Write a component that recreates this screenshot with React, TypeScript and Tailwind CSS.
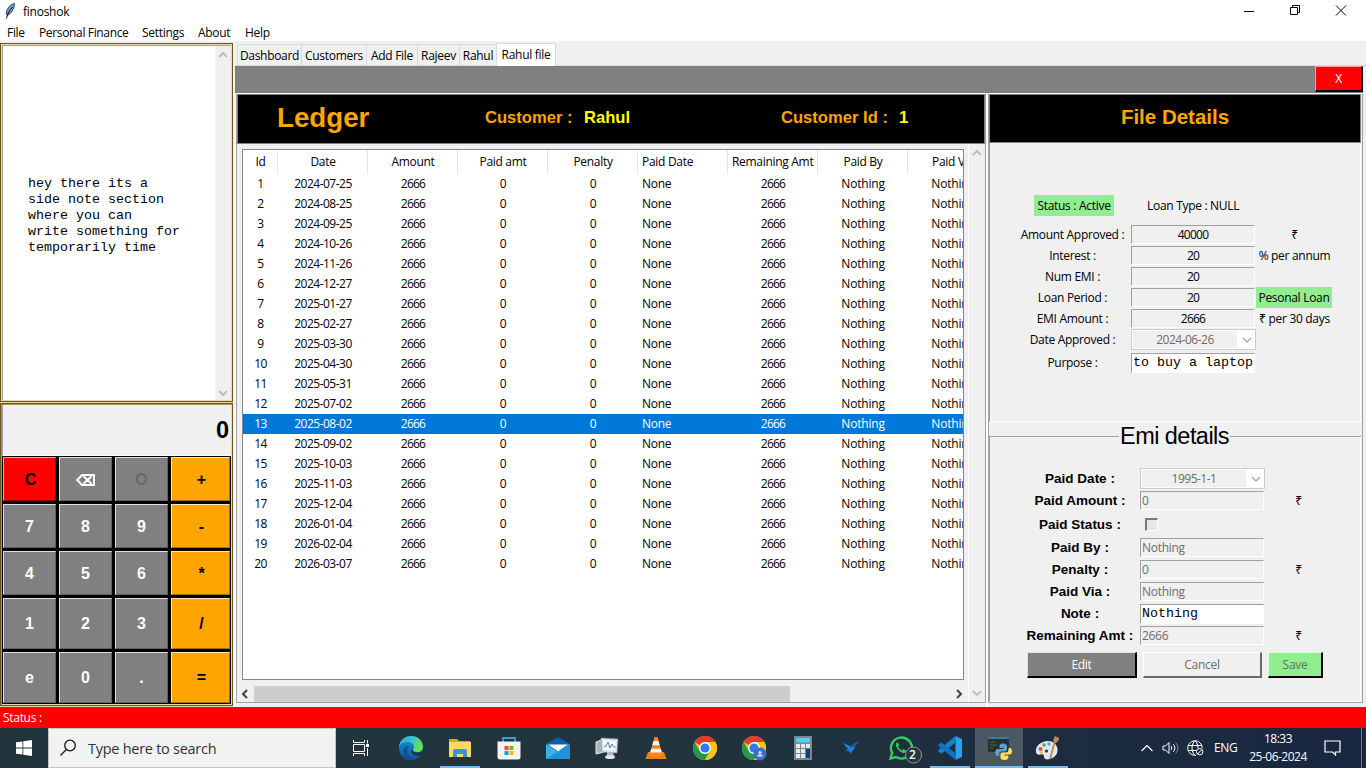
import React from "react";

const ui = "font-['Open_Sans','Noto_Sans',sans-serif] text-[12px] leading-none tracking-[-0.3px]";
const arial = "font-['Liberation_Sans',Arial,sans-serif]";
const mono = "font-['Liberation_Mono','Courier_New',monospace]";

const dates = [
  "2024-07-25", "2024-08-25", "2024-09-25", "2024-10-26", "2024-11-26",
  "2024-12-27", "2025-01-27", "2025-02-27", "2025-03-30", "2025-04-30",
  "2025-05-31", "2025-07-02", "2025-08-02", "2025-09-02", "2025-10-03",
  "2025-11-03", "2025-12-04", "2026-01-04", "2026-02-04", "2026-03-07",
];

function Chevron({ dir, color = "#bfbfbf", w = 2 }: { dir: "up" | "down" | "left" | "right"; color?: string; w?: number }) {
  const d = {
    up: "M1 7l4-4 4 4",
    down: "M1 3l4 4 4-4",
    left: "M7 1L3 5l4 4",
    right: "M3 1l4 4-4 4",
  }[dir];
  return (
    <svg width="10" height="10" viewBox="0 0 10 10" fill="none" stroke={color} strokeWidth={w}>
      <path d={d} />
    </svg>
  );
}

function TitleBar() {
  return (
    <div className="flex h-[22px] shrink-0 items-center bg-white">
      <svg className="ml-[4px] shrink-0" width="12" height="16" viewBox="0 0 12 16">
        <path d="M10.5 .5C7 1 3.500 4.500 2.500 9c-.3 1.500 0 3 .7 3.500C7 11 10.500 6 10.500 .5Z" fill="#6f9bd0" stroke="#1b2636" strokeWidth=".8" />
        <path d="M8.500 4C6 7 3.500 10 2.500 15.500" fill="none" stroke="#0b0f16" strokeWidth="1" />
      </svg>
      <span className="ml-[7px] mt-[2px] tracking-[-0.25px]">finoshok</span>
      <div className="ml-auto flex items-center">
        <svg width="46" height="22" viewBox="0 0 46 22"><path d="M18 11.500h10" stroke="#000" /></svg>
        <svg width="46" height="22" viewBox="0 0 46 22" fill="none" stroke="#000">
          <path d="M18.500 7.500h7v7h-7zM20.500 7.500v-2h7v7h-2" />
        </svg>
        <svg width="46" height="22" viewBox="0 0 46 22" stroke="#000"><path d="M18 5.500l10 10M28 5.500l-10 10" /></svg>
        <div className="w-[2px]" />
      </div>
    </div>
  );
}

function MenuBar() {
  return (
    <div className="flex h-[19px] shrink-0 items-center bg-white pl-[7px] pt-[2px]">
      <span className="w-[32px]">File</span>
      <span className="w-[103px] whitespace-nowrap tracking-[-0.35px]">Personal Finance</span>
      <span className="w-[56px]">Settings</span>
      <span className="w-[47px]">About</span>
      <span>Help</span>
    </div>
  );
}

function Notes() {
  return (
    <div className="flex h-[359px] border border-[#6b561c] shadow-[inset_1px_1px_0_#e8dcae] p-px">
      <div className="flex flex-1 border-l border-t border-[#a0a0a0] bg-white">
        <div className={`${mono} flex-1 whitespace-pre pl-[25px] pt-[130px] text-[13.33px] leading-[16px] tracking-normal`}>
          {"hey there its a\nside note section\nwhere you can\nwrite something for\ntemporarily time"}
        </div>
        <div className="flex w-[16px] flex-col items-center justify-between bg-[#f0f0f0] pb-[2px] pt-[4px]">
          <Chevron dir="up" />
          <Chevron dir="down" />
        </div>
      </div>
    </div>
  );
}

const keys: [string, string][][] = [
  [["C", "red"], ["⌫", "g"], ["O", "off"], ["+", "o"]],
  [["7", "g"], ["8", "g"], ["9", "g"], ["-", "o"]],
  [["4", "g"], ["5", "g"], ["6", "g"], ["*", "o"]],
  [["1", "g"], ["2", "g"], ["3", "g"], ["/", "o"]],
  [["e", "g"], ["0", "g"], [".", "g"], ["=", "o"]],
];

const keyStyle: Record<string, string> = {
  red: "bg-[#ff0000] text-black border-t-[#ffa0a0] border-l-[#ffa0a0] border-b-[#a00000] border-r-[#a00000] pl-[2px]",
  g: "bg-[#808080] text-white border-t-[#e0e0e0] border-l-[#e0e0e0] border-b-[#606060] border-r-[#606060]",
  off: "bg-[#808080] text-[#696969] border-t-[#e0e0e0] border-l-[#e0e0e0] border-b-[#606060] border-r-[#606060]",
  o: "bg-[#ffa500] text-black border-t-[#ffe9b8] border-l-[#ffe9b8] border-b-[#a87000] border-r-[#a87000] pl-[2px]",
};

function BackspaceGlyph() {
  return (
    <svg width="20" height="14" viewBox="0 0 20 14" fill="none" stroke="#fff" strokeWidth="2">
      <path d="M1.200 7L6 2h12v10H6zM7.500 3.200l8 7.600M15.500 3.200l-8 7.600" />
    </svg>
  );
}

function Calculator() {
  return (
    <div className="flex flex-1 flex-col border border-[#6b561c] p-px shadow-[inset_1px_1px_0_#a99450]">
      <div className={`${arial} flex h-[51px] items-center justify-end border-b border-l border-[#fff] border-l-[#a0a0a0] bg-[#f0f0f0] pr-[2px] text-[23.500px] font-bold tracking-normal`}>
        <span className="mt-px">0</span>
      </div>
      <div className="grid flex-1 grid-cols-[53px_53px_53px_59px] grid-rows-[44px_44px_44px_51px_51px] gap-[3px] bg-black pl-px pt-px">
        {keys.flat().map(([k, s]) => (
          <div key={k} className={`${arial} flex items-center justify-center border pt-px text-[16px] font-bold tracking-normal ${keyStyle[s]}`}>
            {k === "⌫" ? <BackspaceGlyph /> : k}
          </div>
        ))}
      </div>
    </div>
  );
}

function Tabs() {
  const tab = "flex h-[21px] items-center justify-center border-l border-t border-[#d9d9d9] bg-[#f0f0f0] pt-px whitespace-nowrap";
  return (
    <div className="flex h-[25px] items-end border-b border-[#d9d9d9] pl-[2px] pt-[2px]">
      <div className={`${tab} w-[64px]`}>Dashboard</div>
      <div className={`${tab} w-[65px]`}>Customers</div>
      <div className={`${tab} w-[51px]`}>Add File</div>
      <div className={`${tab} w-[42px]`}>Rajeev</div>
      <div className={`${tab} w-[37px]`}>Rahul</div>
      <div className="-mb-px flex h-[23px] w-[60px] items-center justify-center border border-b-0 border-[#d9d9d9] bg-white">Rahul file</div>
    </div>
  );
}

const cols = "grid grid-cols-[35px_90px_90px_90px_90px_90px_90px_90px_90px]";

function LedgerTable() {
  const head = ["Id", "Date", "Amount", "Paid amt", "Penalty", "Paid Date", "Remaining Amt", "Paid By", "Paid Via"];
  return (
    <div className="h-[531px] w-[722px] overflow-hidden border border-[#828790] bg-white">
      <div className={`${cols} h-[24px]`}>
        {head.map((h, i) => (
          <div key={h} className={`flex items-center overflow-hidden whitespace-nowrap border-r border-[#e5e5e5] ${i === 5 || i === 6 ? "justify-start pl-[4px]" : "justify-center pl-px"}`}>
            {h}
          </div>
        ))}
      </div>
      {dates.map((d, i) => {
        const on = i === 12;
        return (
          <div key={d} className={`${cols} h-[20px] items-center text-center ${on ? "bg-[#0078d7] text-white" : ""}`}>
            <span className="tracking-[-0.6px]">{i + 1}</span>
            <span className="tracking-[-0.5px]">{d}</span>
            <span className="tracking-[-0.75px]">2666</span>
            <span>0</span>
            <span>0</span>
            <span className="pl-[4px] text-left">None</span>
            <span className="tracking-[-0.75px]">2666</span>
            <span className="tracking-[-0.2px]">Nothing</span>
            <span className="tracking-[-0.2px]">Nothing</span>
          </div>
        );
      })}
    </div>
  );
}

function Ledger() {
  return (
    <div className="flex w-[750px] shrink-0 flex-col border border-t-white border-l-[#a0a0a0] border-r-[#a0a0a0] border-b-[#a0a0a0]">
      <div className={`${arial} flex h-[50px] shrink-0 items-center border border-[#808080] bg-black pb-[2px] font-bold tracking-normal text-[#ffa500]`}>
        <span className="ml-[39px] w-[208px] text-[27.700px]">Ledger</span>
        <span className="w-[99px] whitespace-nowrap text-[16.600px]">Customer :</span>
        <span className="w-[197px] text-[16.600px] text-[#ffff00]">Rahul</span>
        <span className="w-[118px] whitespace-nowrap text-[16.600px]">Customer Id :</span>
        <span className="text-[16.600px] text-[#ffff00]">1</span>
      </div>
      <div className="flex flex-1">
        <div className="flex w-[731px] flex-col pt-[5px]">
          <div className="pl-[5px]">
            <LedgerTable />
          </div>
          <div className="mt-[6px] flex h-[16px] items-center pl-[3px]">
            <Chevron dir="left" color="#404040" />
            <div className="ml-[4px] h-full w-[536px] bg-[#cdcdcd]" />
            <div className="ml-auto mr-[4px] h-[10px]">
              <Chevron dir="right" color="#404040" />
            </div>
          </div>
        </div>
        <div className="flex flex-1 flex-col items-center justify-between border-l border-white py-[4px]">
          <Chevron dir="up" />
          <Chevron dir="down" />
        </div>
      </div>
    </div>
  );
}

const sunken = "border border-t-[#a0a0a0] border-l-[#a0a0a0] border-b-white border-r-white";

function DateBox({ value }: { value: string }) {
  return (
    <div className="flex h-[21px] w-[125px] border border-[#cccccc] bg-white p-px text-[#6d6d6d]">
      <div className="flex flex-1 items-center justify-center bg-[#f0f0f0] tracking-[-0.5px]">{value}</div>
      <div className="flex w-[17px] items-center justify-center pl-[2px]">
        <Chevron dir="down" color="#a8a8a8" w={1.3} />
      </div>
    </div>
  );
}

function DetailRow({ label, value, extra, badge }: { label: string; value: string; extra?: string; badge?: boolean }) {
  return (
    <div className="grid h-[21px] grid-cols-[117px_124px_78px] items-center whitespace-nowrap text-center">
      <span>{label}</span>
      <div className={`${sunken} flex h-[19px] items-center justify-center tracking-[-0.75px]`}>{value}</div>
      <div className={`ml-px flex h-[21px] items-center justify-center ${badge ? "w-[76px] bg-[#90ee90]" : ""}`}>{extra}</div>
    </div>
  );
}

function FileDetails() {
  return (
    <div className="flex h-[279px] flex-col border-b border-l border-r border-b-white border-l-[#a0a0a0] border-r-white pl-[24px] pt-[52px]">
      <div className="mb-[8px] flex h-[21px] whitespace-nowrap">
        <span className="ml-[20px] flex w-[80px] items-center justify-center bg-[#90ee90]">Status : Active</span>
        <span className="ml-[33px] flex items-center">Loan Type : NULL</span>
      </div>
      <DetailRow label="Amount Approved :" value="40000" extra="₹" />
      <DetailRow label="Interest :" value="20" extra="% per annum" />
      <DetailRow label="Num EMI :" value="20" />
      <DetailRow label="Loan Period :" value="20" extra="Pesonal Loan" badge />
      <DetailRow label="EMI Amount :" value="2666" extra="₹ per 30 days" />
      <div className="grid h-[21px] grid-cols-[117px_125px] items-center text-center">
        <span>Date Approved :</span>
        <DateBox value="2024-06-26" />
      </div>
      <div className="mt-[3px] grid h-[20px] grid-cols-[117px_124px] items-center text-center">
        <span>Purpose :</span>
        <div className={`${mono} ${sunken} flex h-[20px] items-center whitespace-nowrap bg-white pl-px text-[13.33px] tracking-normal`}>to buy a laptop</div>
      </div>
    </div>
  );
}

function EmiLabel({ children }: { children: React.ReactNode }) {
  return <span className={`${arial} whitespace-nowrap text-center text-[13.5px] font-bold tracking-normal`}>{children}</span>;
}

const emiRow = "grid grid-cols-[120px_125px_67px] items-center pl-[30px]";

function EmiRow({ label, value, rupee, note }: { label: string; value: string; rupee?: boolean; note?: boolean }) {
  return (
    <div className={`${emiRow} h-[22px]`}>
      <EmiLabel>{label}</EmiLabel>
      {note ? (
        <div className={`${mono} ${sunken} flex h-[20px] w-[124px] items-center bg-white pl-px text-[13.33px] tracking-normal`}>{value}</div>
      ) : (
        <div className={`${sunken} mb-px flex h-[19px] w-[124px] items-center pl-px text-[#6d6d6d]`}>{value}</div>
      )}
      <span className="text-center">{rupee ? "₹" : ""}</span>
    </div>
  );
}

function EmiDetails() {
  return (
    <div className="flex flex-1 flex-col">
      <div className="flex h-[29px] items-center">
        <div className="h-px w-[130px] bg-[#a0a0a0]" />
        <span className={`${arial} w-[111px] whitespace-nowrap text-center text-[23.500px] tracking-[-0.55px]`}>Emi details</span>
        <div className="h-px flex-1 bg-[#a0a0a0]" />
      </div>
      <div className="-mt-[14px] flex flex-1 flex-col border-b border-l border-r border-b-white border-l-[#a0a0a0] border-r-white pt-[31px]">
        <div className={`${emiRow} mb-px h-[21px]`}>
          <EmiLabel>Paid Date :</EmiLabel>
          <DateBox value="1995-1-1" />
        </div>
        <EmiRow label="Paid Amount :" value="0" rupee />
        <div className={`${emiRow} h-[25px]`}>
          <EmiLabel>Paid Status :</EmiLabel>
          <div className="ml-[5px] h-[13px] w-[13px] border-2 border-b border-r border-t-[#7a7a7a] border-l-[#7a7a7a] border-b-white border-r-white bg-[#e6e6e6]" />
        </div>
        <EmiRow label="Paid By :" value="Nothing" />
        <EmiRow label="Penalty :" value="0" rupee />
        <EmiRow label="Paid Via :" value="Nothing" />
        <EmiRow label="Note :" value="Nothing" note />
        <EmiRow label="Remaining Amt :" value="2666" rupee />
        <div className="mt-[5px] flex pl-[37px]">
          <div className="flex h-[26px] w-[110px] items-center justify-center border-b-2 border-l border-r-2 border-t border-b-black border-l-[#e0e0e0] border-r-black border-t-[#e0e0e0] bg-[#808080] text-white">Edit</div>
          <div className="ml-[6px] flex h-[26px] w-[119px] items-center justify-center border-b-2 border-l border-r-2 border-t border-b-[#696969] border-l-white border-r-[#696969] border-t-white text-[#6d6d6d]">Cancel</div>
          <div className="ml-[6px] flex h-[26px] w-[55px] items-center justify-center border-b-2 border-l border-r-2 border-t border-b-black border-l-[#d8ffd8] border-r-black border-t-[#d8ffd8] bg-[#90ee90] text-[#6d6d6d]">Save</div>
        </div>
      </div>
    </div>
  );
}

function RightPanel() {
  return (
    <div className="flex w-[375px] shrink-0 flex-col border border-t-white border-l-[#a0a0a0] border-r-[#a0a0a0] border-b-[#a0a0a0] pr-px">
      <div className={`${arial} flex h-[49px] shrink-0 items-center justify-center border border-[#808080] bg-black pb-[2px] text-[20.500px] font-bold tracking-normal text-[#ffa500]`}>
        File Details
      </div>
      <FileDetails />
      <EmiDetails />
    </div>
  );
}

function Chrome() {
  return (
    <g>
      <circle cx="12" cy="12" r="12" fill="#fbc116" />
      <path d="M12 12L1.600 6A12 12 0 0 1 22.400 6Z" fill="#e33b2e" />
      <path d="M12 6H22.400A12 12 0 0 0 12 0Z" fill="#e33b2e" />
      <path d="M1.600 6A12 12 0 0 0 12 24L17.200 15L12 12L6.800 15Z" fill="#229a4a" />
      <path d="M12 6h10.400A12 12 0 0 1 12 24l5.200-9z" fill="#fcc31b" />
      <circle cx="12" cy="12" r="6" fill="#fff" />
      <circle cx="12" cy="12" r="4.600" fill="#3079ee" />
    </g>
  );
}

const icons: { name: string; art: React.ReactNode; state?: "open" | "active" }[] = [
  {
    name: "edge",
    art: (
      <g>
        <defs>
          <linearGradient id="e1" x1="0" y1="0" x2="1" y2="0.400"><stop offset="0" stopColor="#2aa7e0" /><stop offset=".5" stopColor="#34c3d8" /><stop offset="1" stopColor="#6bdf4f" /></linearGradient>
          <linearGradient id="e2" x1="0" y1="0" x2="0" y2="1"><stop offset="0" stopColor="#1b8ddb" /><stop offset="1" stopColor="#0c59a4" /></linearGradient>
        </defs>
        <circle cx="12" cy="12" r="12" fill="url(#e2)" />
        <path d="M0 11C.5 4 6 0 12 0c7 0 12 5 12 10.500 0 3.500-2.500 5.500-5.500 5.500-2.500 0-4.500-.8-4.500-2 0-.8 1-1.200 1-3C15 8 12 6 8.500 6 4.500 6 1 8.500 0 11Z" fill="url(#e1)" />
        <path d="M10 10c-2.500 2-2.500 7 1 10 3 2.500 7 2.500 11-.5-2.500 3.500-7 5-11 4.500C5 23 3 17 5 13c1-2 3-3 5-3Z" fill="#134f91" />
        <path d="M13.500 13.500c0 3 4.500 4.300 9.500 1.500l1.500 3c-4 3.500-12 2-12.500-3z" fill="#213740" />
      </g>
    ),
  },
  {
    name: "explorer",
    state: "open",
    art: (
      <g>
        <path d="M1 3h8l2 2h11v4H1z" fill="#e0a526" />
        <path d="M1 6h22v15H1z" fill="#ffd767" />
        <path d="M5 21v-6a2 2 0 0 1 2-2h10a2 2 0 0 1 2 2v6h-4v-3H9v3z" fill="#3f93cf" />
      </g>
    ),
  },
  {
    name: "store",
    art: (
      <g>
        <path d="M6 7V2h12v5" fill="none" stroke="#2fa8dc" strokeWidth="1.800" />
        <path d="M.5 5.500h23V21a2.500 2.500 0 0 1-2.500 2.500H3A2.500 2.500 0 0 1 .5 21z" fill="#f4f4f4" />
        <path d="M7.500 10h4v4h-4z" fill="#f25022" /><path d="M12.500 10h4v4h-4z" fill="#7fba00" />
        <path d="M7.500 15h4v4h-4z" fill="#00a4ef" /><path d="M12.500 15h4v4h-4z" fill="#ffb900" />
      </g>
    ),
  },
  {
    name: "mail",
    art: (
      <g>
        <path d="M0 8L12 1l12 7v4H0z" fill="#0f5fae" />
        <path d="M0 8l12 8 12-8v15H0z" fill="#35b4ee" />
        <path d="M0 23L24 8v15z" fill="#1f93dd" />
        <path d="M2 8.500h20L12 15.500z" fill="#f5f9fc" />
      </g>
    ),
  },
  {
    name: "monitor",
    art: (
      <g>
        <path d="M1 6l8-3v13l-8 2z" fill="#aab3b8" stroke="#e8ecee" />
        <path d="M6 2l17 1-1 14-15-1z" fill="#dfe4e7" stroke="#8d979d" strokeWidth=".6" />
        <path d="M8 4.200l13 .8-.8 9.500L9 13.700z" fill="#f7fbff" />
        <path d="M9 11l2-1 2-4 2 6 2-4 1.500 3h2" fill="none" stroke="#3f86c5" />
        <path d="M12 16h6l1 4h-7z" fill="#b4bbc0" /><ellipse cx="15" cy="21" rx="5" ry="2" fill="#e1e5e7" />
      </g>
    ),
  },
  {
    name: "vlc",
    art: (
      <g>
        <path d="M4 16h16l2.500 7h-21z" fill="#f07c12" />
        <path d="M10.500 1h3L18.500 19c-3 2-10 2-13 0z" fill="#f78b1e" />
        <path d="M9.500 5h5l1.200 4.200H8.300zM7.200 12.800h9.600l1 3.700H6.200z" fill="#f4f4f4" />
      </g>
    ),
  },
  { name: "chrome", art: <Chrome /> },
  {
    name: "chrome-profile",
    art: (
      <g>
        <Chrome />
        <circle cx="18" cy="18" r="6.500" fill="#3f6fc4" />
        <circle cx="18" cy="16.500" r="1.500" fill="#dce8fb" /><path d="M15.300 20.500c0-3 5.400-3 5.400 0z" fill="#dce8fb" />
      </g>
    ),
  },
  {
    name: "calculator",
    art: (
      <g>
        <path d="M3 0h18v24H3z" fill="#7d868c" /><path d="M5 2h14v4.500H5z" fill="#4fd0f5" />
        <path d="M5 8h4v4H5zM10 8h4v4h-4zM15 8h4v4h-4zM5 13h4v4H5zM10 13h4v4h-4zM5 18h4v4H5zM10 18h4v4h-4z" fill="#e6e9eb" />
        <path d="M15 13h4v9h-4z" fill="#12407c" />
      </g>
    ),
  },
  {
    name: "bird",
    art: (
      <g>
        <path d="M3.500 6.500c3 2.500 5 2 7.500 4.500C12 8 15 6.500 20 6c-2.500 1-4.500 2-5 5-.5 3-3.500 4-4.500 7.500-.3-2-.8-3-2.500-3.800l-2.500.2L8 12.800C6 11.500 4.500 9.500 3.500 6.500Z" fill="#1b7fe0" />
        <path d="M11 11C12 8 15 6.500 20 6c-3 1.500-5 2.500-6 5.500z" fill="#1559a8" />
      </g>
    ),
  },
  {
    name: "whatsapp",
    art: (
      <g>
        <path d="M1.500 22.500l1.600-5.700A10.500 10.500 0 1 1 7 21z" fill="none" stroke="#30cf5c" strokeWidth="2.400" />
        <path d="M8 6.500c-1.500 1-1.500 3 0 5.500s4 4.500 6 5c2 .3 3-1 3-2.500l-2.800-1.400-1.300 1.400c-1.500-.6-3-2-3.800-3.800l1-1.200L9 6.500z" fill="#30cf5c" />
        <circle cx="24.500" cy="19" r="8" fill="#26343b" stroke="#98a1a6" strokeWidth=".9" />
      </g>
    ),
  },
  {
    name: "vscode",
    state: "open",
    art: (
      <g>
        <path d="M17.500 0L24 3v18l-6.500 3z" fill="#2aa3ef" />
        <path d="M17.500 0v6.500L3.500 17.500.5 15.500v-1.500z" fill="#1583cf" />
        <path d="M17.500 24v-6.500L3.500 6.500.5 8.500V10z" fill="#1073bd" />
      </g>
    ),
  },
  {
    name: "python",
    state: "active",
    art: (
      <g>
        <path d="M1 1h21v15H1z" fill="#26312f" /><path d="M1 1h21v2H1z" fill="#2f79b5" />
        <path d="M3 6h5M3 9h7M3 12h4" stroke="#3d6d3f" />
        <path d="M16 7.500c-3 0-3.500 1-3.500 2.500v2h4v1h-5.500c-2 0-2.800 1.500-2.800 3.500s1 3.500 2.500 3.500h1.300v-2c0-1.500 1-2.500 2.500-2.500h3.500c1.200 0 2-1 2-2V10c0-1.500-1.500-2.500-4-2.500z" fill="#5d9fd3" />
        <path d="M17.500 24c3 0 3.800-1 3.800-2.500v-2h-4v-1h5.200c1.800 0 2.500-1.500 2.500-3.300s-1-3.200-2.200-3.200h-1.300v2c0 1.500-1 2.500-2.500 2.500h-3.200c-1.300 0-2.300 1-2.300 2.200v3c0 1.300 1.500 2.300 4 2.300z" fill="#ffde57" />
      </g>
    ),
  },
  {
    name: "paint",
    state: "open",
    art: (
      <g>
        <path d="M12 5C5 5-1 10 0 16c.5 3 3 3 5 2.500s3 .5 3 2.500 3 3 6 2c5-1.500 8-5 7.500-10C21 8 17 5 12 5Z" fill="#dbe9f2" />
        <circle cx="4.500" cy="13" r="2" fill="#e0503a" /><circle cx="8" cy="9" r="1.800" fill="#5bb04c" /><circle cx="13" cy="8" r="1.700" fill="#4ab0dd" />
        <circle cx="10.500" cy="15" r="1.600" fill="#203040" /><circle cx="5.500" cy="16.500" r="1.400" fill="#efbd34" />
        <path d="M14 23L19 5" stroke="#c88642" strokeWidth="1.800" /><path d="M17 5l2-5 4 2 0 2-3 3z" fill="#b98a58" />
      </g>
    ),
  },
];

function Taskbar() {
  return (
    <div className="flex h-[40px] shrink-0 items-stretch bg-linear-to-r from-[#22353c] via-[#22333d] to-[#192641] text-white">
      <div className="flex w-[48px] items-center justify-center">
        <svg width="16" height="16" viewBox="0 0 16 16" fill="#fff">
          <path d="M0 2.300L6.500 1.400V7.600H0zM7.300 1.300L16 0V7.600H7.300zM0 8.400H6.500V14.600L0 13.700zM7.300 8.400H16V16L7.300 14.800z" />
        </svg>
      </div>
      <div className="flex w-[288px] items-center border border-[#c4c4c4] bg-[#f2f2f2] pl-[10px]">
        <svg width="18" height="18" viewBox="0 0 18 18" fill="none" stroke="#1a1a1a" strokeWidth="1.300">
          <circle cx="11" cy="6.500" r="5.300" /><path d="M7.300 10.500L1.500 16.500" />
        </svg>
        <span className="ml-[11px] mt-[2px] text-[14.5px] text-[#333] tracking-[-0.27px]">Type here to search</span>
      </div>
      <div className="flex w-[50px] items-center justify-center">
        <svg width="17" height="16" viewBox="0 0 17 16" fill="none" stroke="#fff">
          <path d="M.5 4.500h11v7H.5zM.5 0v2.500h11V0M.5 16v-2.500h11V16M14.500 0v3.500M14.500 8v8" /><path d="M13 4h3v3h-3z" fill="#fff" stroke="none" />
        </svg>
      </div>
      {icons.map(({ name, art, state }) => (
        <div key={name} className="relative flex w-[49px] flex-col items-center">
          <div className={`flex h-[38px] items-center justify-center ${state === "active" ? "w-[48px] bg-[#4a5864]" : "w-[40px]"}`}>
            <svg className="mt-[2px] overflow-visible" width="24" height="24" viewBox="0 0 24 24">{art}</svg>
          </div>
          {state && <div className={`h-[2px] bg-[#76b9ed] ${state === "active" ? "w-[48px]" : "w-[40px]"}`} />}
          {name === "whatsapp" && <span className="absolute left-[33px] top-[21px] text-[12px] font-semibold">2</span>}
        </div>
      ))}
      <div className="ml-auto flex items-center">
        <svg width="12" height="8" viewBox="0 0 12 8" fill="none" stroke="#fff" strokeWidth="1.200"><path d="M.5 7L6 1.500 11.500 7" /></svg>
        <svg className="ml-[9px]" width="18" height="14" viewBox="0 0 18 14" fill="none" stroke="#fff">
          <path d="M1 5h2.500L7 1.500v11L3.500 9H1zM9 5c1 1.200 1 2.800 0 4M11.300 3.200c2 2.200 2 5.400 0 7.600" /><path d="M13.700 1.500c3 3.200 3 7.800 0 11" stroke="#8391a0" />
        </svg>
        <svg className="ml-[7px]" width="17" height="16" viewBox="0 0 17 16" fill="none" stroke="#fff">
          <path d="M9 15.300A7.300 7.300 0 1 1 15.300 8M8 .7C4 4 4 12 8 15.300M8 .7c2 2 3 4.500 3 7.300M1 5.500h14M1 10.500h8" />
          <circle cx="12.700" cy="11.700" r="3.200" /><path d="M10.500 14l4.500-4.500" />
        </svg>
        <span className="ml-[10px] w-[24px] text-[12px] tracking-[-0.4px]">ENG</span>
        <div className="ml-[10px] flex w-[60px] flex-col items-center gap-[6px] whitespace-nowrap text-[12px] tracking-[-0.5px]">
          <span>18:33</span>
          <span>25-06-2024</span>
        </div>
        <svg className="ml-[16px]" width="17" height="16" viewBox="0 0 17 16" fill="none" stroke="#fff" strokeWidth="1.200">
          <path d="M1 1h15v11h-4.500v3L8.500 12H1z" />
        </svg>
        <div className="ml-[20px] h-[40px] w-px bg-[#6a7482]" />
        <div className="w-[4px]" />
      </div>
    </div>
  );
}

export default function App() {
  return (
    <div className={`${ui} flex h-[768px] w-[1366px] flex-col overflow-hidden bg-[#f0f0f0] text-black`}>
      <TitleBar />
      <MenuBar />
      <div className="flex min-h-0 flex-1 pt-[2px]">
        <div className="flex w-[233px] shrink-0 flex-col gap-px bg-[#e6d9ad] pb-px">
          <Notes />
          <Calculator />
        </div>
        <div className="flex flex-1 flex-col pl-[2px] -mt-[2px]">
          <Tabs />
          <div className="flex h-[27px] w-[1128px] shrink-0 justify-end bg-[#808080]">
            <div className="flex h-[26px] w-[48px] items-center justify-center border-b-2 border-l border-r-2 border-t border-b-black border-l-[#ff9a9a] border-r-black border-t-[#ff9a9a] bg-[#ff0000] text-white">X</div>
          </div>
          <div className="flex min-h-0 w-[1128px] flex-1 gap-[2px] bg-white pl-px">
            <div className="flex bg-[#f0f0f0] pb-[4px]"><Ledger /></div>
            <div className="flex bg-[#f0f0f0] pb-[4px]"><RightPanel /></div>
          </div>
        </div>
      </div>
      <div className="flex h-[21px] shrink-0 items-center bg-[#ff0000] pl-[3px] text-white">Status :</div>
      <Taskbar />
    </div>
  );
}
